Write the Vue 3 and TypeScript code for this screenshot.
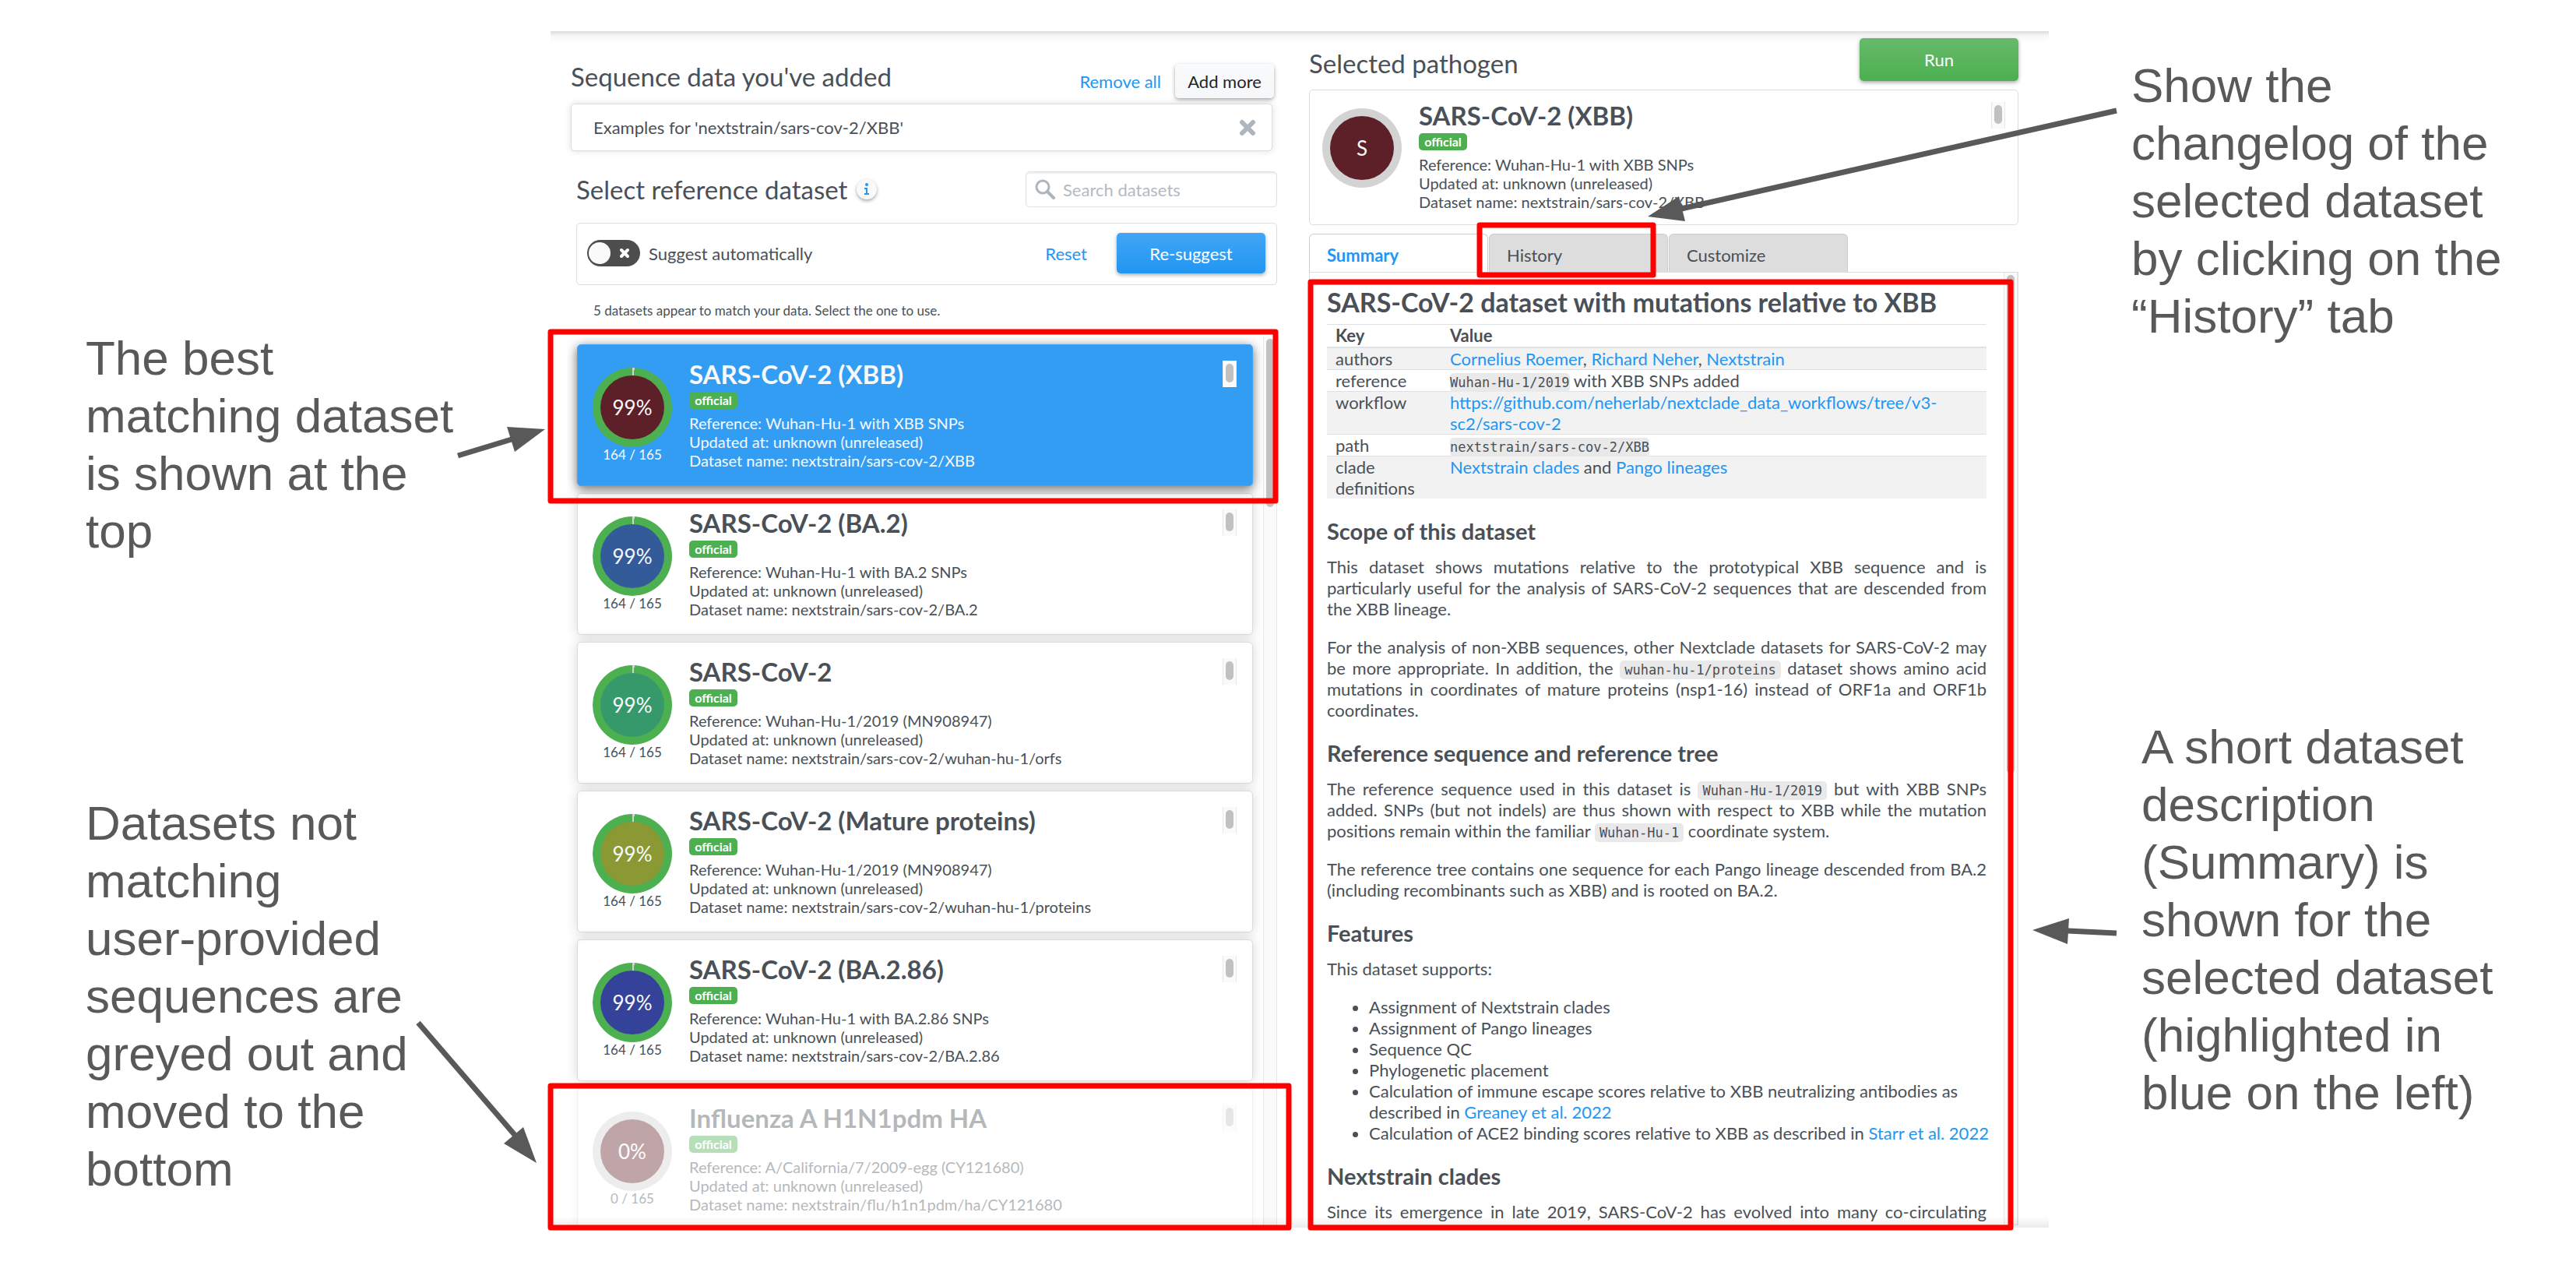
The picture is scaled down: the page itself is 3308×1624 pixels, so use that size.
<script setup lang="ts">
import { ref } from 'vue'

interface Dataset {
  name: string
  reference: string
  path: string
  color: string
  percent: string
  count: string
  matched: boolean
}

const datasets: Dataset[] = [
  { name: 'SARS-CoV-2 (XBB)', reference: 'Wuhan-Hu-1 with XBB SNPs', path: 'nextstrain/sars-cov-2/XBB', color: '#5e2028', percent: '99%', count: '164 / 165', matched: true },
  { name: 'SARS-CoV-2 (BA.2)', reference: 'Wuhan-Hu-1 with BA.2 SNPs', path: 'nextstrain/sars-cov-2/BA.2', color: '#345b99', percent: '99%', count: '164 / 165', matched: true },
  { name: 'SARS-CoV-2', reference: 'Wuhan-Hu-1/2019 (MN908947)', path: 'nextstrain/sars-cov-2/wuhan-hu-1/orfs', color: '#36996b', percent: '99%', count: '164 / 165', matched: true },
  { name: 'SARS-CoV-2 (Mature proteins)', reference: 'Wuhan-Hu-1/2019 (MN908947)', path: 'nextstrain/sars-cov-2/wuhan-hu-1/proteins', color: '#8a9934', percent: '99%', count: '164 / 165', matched: true },
  { name: 'SARS-CoV-2 (BA.2.86)', reference: 'Wuhan-Hu-1 with BA.2.86 SNPs', path: 'nextstrain/sars-cov-2/BA.2.86', color: '#344299', percent: '99%', count: '164 / 165', matched: true },
  { name: 'Influenza A H1N1pdm HA', reference: 'A/California/7/2009-egg (CY121680)', path: 'nextstrain/flu/h1n1pdm/ha/CY121680', color: '#642127', percent: '0%', count: '0 / 165', matched: false },
]

const selected = ref(0)
const autoSuggest = ref(false)
const search = ref('')
const tabs = ['Summary', 'History', 'Customize']
const activeTab = ref('Summary')

const leftNotes = [
  'The best\nmatching dataset\nis shown at the\ntop',
  'Datasets not\nmatching\nuser-provided\nsequences are\ngreyed out and\nmoved to the\nbottom',
]
const rightNotes = [
  'Show the\nchangelog of the\nselected dataset\nby clicking on the\n“History” tab',
  'A short dataset\ndescription\n(Summary) is\nshown for the\nselected dataset\n(highlighted in\nblue on the left)',
]
</script>

<template>
  <div class="stage">
    <aside class="notes notes-left">
      <p v-for="n in leftNotes" :key="n">{{ n }}</p>
    </aside>

    <main class="app">
      <section class="col">
        <header class="files-head">
          <h2>Sequence data you've added</h2>
          <a href="#">Remove all</a>
          <button type="button" class="btn btn-light">Add more</button>
        </header>
        <div class="file">
          <span>Examples for 'nextstrain/sars-cov-2/XBB'</span>
          <button type="button" class="icon-btn" aria-label="Remove file">
            <svg width="22" height="22" viewBox="0 0 22 22"><path d="M4 4L18 18M18 4L4 18" stroke="#adb5bd" stroke-width="6" stroke-linecap="round" /></svg>
          </button>
        </div>

        <div class="picker">
          <div class="picker-head">
            <h2>Select reference dataset</h2>
            <button type="button" class="info" aria-label="Info">
              <svg width="26" height="26" viewBox="0 0 26 26"><circle cx="13" cy="7" r="2" fill="#2196f3" /><path d="M10 11h4v7h2v2h-6v-2h2v-5h-2z" fill="#2196f3" /></svg>
            </button>
            <label class="search">
              <svg width="28" height="28" viewBox="0 0 28 28"><circle cx="11" cy="11" r="8" fill="none" stroke="#adb5bd" stroke-width="3" /><path d="M17 17L25 25" stroke="#adb5bd" stroke-width="4" stroke-linecap="round" /></svg>
              <input v-model="search" type="text" placeholder="Search datasets" aria-label="Search datasets" />
            </label>
          </div>

          <div class="suggest">
            <label class="switch">
              <input v-model="autoSuggest" type="checkbox" />
              <span class="track">
                <i class="knob"></i>
                <svg width="14" height="14" viewBox="0 0 14 14"><path d="M3 3L11 11M11 3L3 11" stroke="#fff" stroke-width="4" stroke-linecap="round" /></svg>
              </span>
              <span>Suggest automatically</span>
            </label>
            <a href="#">Reset</a>
            <button type="button" class="btn btn-blue">Re-suggest</button>
          </div>
          <p class="hint">5 datasets appear to match your data. Select the one to use.</p>
        </div>

        <div class="list">
          <div class="cards">
            <article
              v-for="(d, i) in datasets"
              :key="d.path"
              class="card"
              :class="{ active: i === selected, dim: !d.matched }"
              @click="selected = i"
            >
              <div class="score">
                <div class="ring" :class="{ full: d.matched }">
                  <span class="disc" :style="{ background: d.color }">{{ d.percent }}</span>
                </div>
                <small>{{ d.count }}</small>
              </div>
              <div class="info-text">
                <h3>{{ d.name }}</h3>
                <span class="badge">official</span>
                <p>Reference: {{ d.reference }}</p>
                <p>Updated at: unknown (unreleased)</p>
                <p>Dataset name: {{ d.path }}</p>
              </div>
              <div class="mini-scroll"><i></i></div>
            </article>
          </div>
          <div class="scrollbar list-bar"><i></i></div>
        </div>
      </section>

      <section class="col">
        <header class="run-head">
          <h2>Selected pathogen</h2>
          <button type="button" class="btn btn-green">Run</button>
        </header>
        <div class="chosen">
          <div class="ring">
            <span class="disc" :style="{ background: datasets[selected].color }">S</span>
          </div>
          <div class="info-text">
            <h3>{{ datasets[selected].name }}</h3>
            <span class="badge">official</span>
            <p>Reference: {{ datasets[selected].reference }}</p>
            <p>Updated at: unknown (unreleased)</p>
            <p>Dataset name: {{ datasets[selected].path }}</p>
          </div>
          <div class="mini-scroll"><i></i></div>
        </div>
        <nav class="tabs">
          <button v-for="t in tabs" :key="t" type="button" :class="{ on: t === activeTab }" @click="activeTab = t">{{ t }}</button>
        </nav>
        <div class="readme">
          <div class="doc">
            <h1>SARS-CoV-2 dataset with mutations relative to XBB</h1>
            <table>
              <thead>
                <tr><th class="key">Key</th><th>Value</th></tr>
              </thead>
              <tbody>
                <tr><td>authors</td><td><a href="#">Cornelius Roemer</a>, <a href="#">Richard Neher</a>, <a href="#">Nextstrain</a></td></tr>
                <tr><td>reference</td><td><code>Wuhan-Hu-1/2019</code> with XBB SNPs added</td></tr>
                <tr><td>workflow</td><td><a href="#">https://github.com/neherlab/nextclade_data_workflows/tree/v3-sc2/sars-cov-2</a></td></tr>
                <tr><td>path</td><td><code>nextstrain/sars-cov-2/XBB</code></td></tr>
                <tr><td>clade definitions</td><td><a href="#">Nextstrain clades</a> and <a href="#">Pango lineages</a></td></tr>
              </tbody>
            </table>
            <h2>Scope of this dataset</h2>
            <p>This dataset shows mutations relative to the prototypical XBB sequence and is particularly useful for the analysis of SARS-CoV-2 sequences that are descended from the XBB lineage.</p>
            <p>For the analysis of non-XBB sequences, other Nextclade datasets for SARS-CoV-2 may be more appropriate. In addition, the <code>wuhan-hu-1/proteins</code> dataset shows amino acid mutations in coordinates of mature proteins (nsp1-16) instead of ORF1a and ORF1b coordinates.</p>
            <h2>Reference sequence and reference tree</h2>
            <p>The reference sequence used in this dataset is <code>Wuhan-Hu-1/2019</code> but with XBB SNPs added. SNPs (but not indels) are thus shown with respect to XBB while the mutation positions remain within the familiar <code>Wuhan-Hu-1</code> coordinate system.</p>
            <p>The reference tree contains one sequence for each Pango lineage descended from BA.2 (including recombinants such as XBB) and is rooted on BA.2.</p>
            <h2>Features</h2>
            <p>This dataset supports:</p>
            <ul>
              <li>Assignment of Nextstrain clades</li>
              <li>Assignment of Pango lineages</li>
              <li>Sequence QC</li>
              <li>Phylogenetic placement</li>
              <li>Calculation of immune escape scores relative to XBB neutralizing antibodies as described in <a href="#">Greaney et al. 2022</a></li>
              <li>Calculation of ACE2 binding scores relative to XBB as described in <a href="#">Starr et al. 2022</a></li>
            </ul>
            <h2>Nextstrain clades</h2>
            <p class="cut">Since its emergence in late 2019, SARS-CoV-2 has evolved into many co-circulating</p>
          </div>
          <div class="scrollbar doc-bar"><i></i></div>
        </div>
      </section>
    </main>

    <aside class="notes notes-right">
      <p v-for="n in rightNotes" :key="n">{{ n }}</p>
    </aside>

    <!-- Callout frames and arrows drawn over the app -->
    <svg class="callouts" viewBox="0 0 3308 1624" preserveAspectRatio="none">
      <g fill="none" stroke="#ff0000" stroke-width="7" stroke-linejoin="round">
        <rect x="707" y="426" width="931" height="217" />
        <rect x="707" y="1394" width="948" height="182" />
        <rect x="1683" y="362" width="899" height="1214" />
        <rect x="1900" y="289" width="223" height="64" />
      </g>
      <g stroke="#595959" stroke-width="7">
        <path d="M588 585L657 564" />
        <path d="M537 1313L661 1457" />
        <path d="M2718 142L2159 268" />
        <path d="M2718 1198L2655 1195" />
      </g>
      <g fill="#595959">
        <path d="M700 551L651 548L661 580Z" />
        <path d="M689 1493L672 1447L647 1468Z" />
        <path d="M2116 278L2156 252L2164 284Z" />
        <path d="M2610 1194L2657 1179L2655 1212Z" />
      </g>
    </svg>
  </div>
</template>

<style>
body {
  margin: 0;
  background: #fff;
}
</style>

<style scoped>
* {
  box-sizing: border-box;
}
.stage {
  position: relative;
  display: grid;
  grid-template-columns: 707fr 1924fr 677fr;
  height: 100vh;
  overflow: hidden;
  font-family: Lato, 'Liberation Sans', sans-serif;
  font-size: 22px;
  line-height: 27px;
  color: #495057;
}
h1, h2, h3, p, ul {
  margin: 0;
}
a {
  color: #2196f3;
  text-decoration: none;
}
button, input {
  font: inherit;
  color: inherit;
}
.callouts {
  position: absolute;
  inset: 0;
  width: 100%;
  height: 100%;
  pointer-events: none;
}

/* Side notes */
.notes {
  display: flex;
  flex-direction: column;
  font-family: 'Liberation Sans', Arial, sans-serif;
  font-size: 62px;
  line-height: 74px;
  color: #595959;
  white-space: pre;
}
.notes-left {
  padding: 423px 0 0 110px;
  gap: 301px;
}
.notes-right {
  padding: 73px 0 0 106px;
  gap: 479px;
}
.notes-right p:last-child {
  padding-left: 13px;
}

/* App frame */
.app {
  position: relative;
  display: grid;
  grid-template-columns: 907fr 911fr;
  gap: 41px;
  min-height: 0;
  margin: 40px 0 48px;
  padding: 0 39px 0 26px;
  background: linear-gradient(#dcdcdc, #f6f6f6 6px, #fff 14px);
}
.app::after {
  content: '';
  position: absolute;
  left: 0;
  right: 0;
  bottom: 0;
  height: 14px;
  background: linear-gradient(rgba(0, 0, 0, 0), rgba(0, 0, 0, 0.08));
}
.col {
  display: flex;
  flex-direction: column;
  min-width: 0;
  min-height: 0;
}
.col h2 {
  font-size: 33px;
  font-weight: 400;
}
.btn {
  border: 0;
  border-radius: 5px;
  color: #fff;
  box-shadow: 0 2px 5px rgba(0, 0, 0, 0.35);
}
.btn-light {
  width: 127px;
  height: 44px;
  padding: 0;
  background: linear-gradient(#f9fafb, #f5f7f9);
  color: #212529;
}
.btn-blue {
  width: 191px;
  height: 52px;
  background: linear-gradient(#42a5f5, #2196f3);
}
.btn-green {
  width: 204px;
  height: 55px;
  background: linear-gradient(#66bb6a, #4caf50);
}

/* Input files */
.files-head {
  display: flex;
  align-items: center;
  gap: 18px;
  height: 44px;
  margin: 42px 4px 0 0;
}
.files-head h2 {
  flex: 1;
  align-self: flex-start;
  line-height: 32px;
}
.file {
  display: flex;
  align-items: center;
  justify-content: space-between;
  height: 61px;
  margin: 7px 6px 0 0;
  padding: 0 20px 0 28px;
  background: #fff;
  border: 1px solid #ddd;
  border-radius: 5px;
  box-shadow: 0 0 10px rgba(0, 0, 0, 0.13);
}
.icon-btn {
  display: flex;
  padding: 0;
  border: 0;
  background: none;
}

/* Dataset picker */
.picker {
  margin: 26px 0 0 7px;
}
.picker-head {
  display: flex;
  align-items: center;
  height: 46px;
}
.picker-head h2 {
  line-height: 46px;
}
.info {
  display: flex;
  width: 26px;
  height: 26px;
  margin-left: 12px;
  padding: 0;
  border: 0;
  border-radius: 50%;
  background: #f8f9fa;
  box-shadow: 0 2px 4px rgba(0, 0, 0, 0.35);
}
.search {
  display: flex;
  align-items: center;
  gap: 9px;
  width: 323px;
  height: 46px;
  margin-left: auto;
  padding: 0 10px;
  border: 1px solid #dee2e6;
  border-radius: 5px;
  box-shadow: inset 0 2px 2px rgba(0, 0, 0, 0.07);
}
.search svg {
  flex: none;
}
.search input {
  min-width: 0;
  flex: 1;
  padding: 0;
  border: 0;
  outline: 0;
  background: none;
}
.search input::placeholder {
  color: #b4bac0;
}
.suggest {
  display: flex;
  align-items: center;
  height: 80px;
  margin-top: 20px;
  padding: 0 14px 2px 13px;
  border: 1px solid #ddd;
  border-radius: 5px;
}
.switch {
  position: relative;
  display: flex;
  align-items: center;
  gap: 11px;
  margin-right: auto;
}
.switch input {
  position: absolute;
  width: 68px;
  height: 34px;
  margin: 0;
  opacity: 0;
}
.track {
  display: flex;
  align-items: center;
  justify-content: space-between;
  width: 68px;
  height: 34px;
  padding: 0 13px 0 2px;
  border-radius: 17px;
  background: #4d4d4d;
}
.knob {
  width: 28px;
  height: 28px;
  border-radius: 50%;
  background: #fafafa;
}
.suggest .btn {
  margin-left: 38px;
}
.hint {
  margin: 21px 0 0 22px;
  font-size: 17px;
  line-height: 24px;
}
.list {
  display: flex;
  flex: 1;
  min-height: 0;
  margin: 21px 0 0 -5px;
  overflow: hidden;
}
.cards {
  display: flex;
  flex: 1;
  flex-direction: column;
  gap: 9px;
  padding: 10px 13px 0;
}
.card {
  display: flex;
  flex: none;
  height: 182px;
  padding: 17px 20px 0 19px;
  border: 1px solid #dcdcdc;
  border-radius: 5px;
  background: #fff;
  box-shadow: 0 0 16px rgba(0, 0, 0, 0.16), inset 0 0 10px rgba(0, 0, 0, 0.02);
}
.card.active {
  position: relative;
  border-color: #42a5f5;
  background: #339df4;
  color: #f8f9fa;
  box-shadow: 0 3px 14px rgba(0, 0, 0, 0.6);
}
.card.dim {
  opacity: 0.4;
  box-shadow: 0 0 10px rgba(0, 0, 0, 0.1);
}
.score {
  display: flex;
  flex-direction: column;
  align-items: center;
  padding-top: 12px;
}
.score small {
  font-size: 17px;
  line-height: 20px;
}
.ring {
  display: flex;
  flex: none;
  width: 102px;
  height: 102px;
  padding: 10px;
  border-radius: 50%;
  background: #d3d3d3;
}
.ring.full {
  background: conic-gradient(#d3d3d3 3deg, #4caf50 3deg);
}
.disc {
  display: flex;
  flex: 1;
  align-items: center;
  justify-content: center;
  border-radius: 50%;
  color: #f8f9fa;
  font-size: 26px;
}
.info-text {
  flex: 1;
  min-width: 0;
  padding-left: 22px;
}
.info-text h3 {
  font-size: 33px;
  font-weight: 700;
  line-height: 40px;
}
.info-text p {
  font-size: 20px;
  line-height: 24px;
}
.badge {
  display: block;
  width: 62px;
  height: 22px;
  margin: 3px 0 6px;
  border-radius: 5px;
  background: #4caf50;
  color: #fff;
  font-size: 16px;
  font-weight: 700;
  line-height: 22px;
  text-align: center;
}
.mini-scroll {
  display: flex;
  justify-content: center;
  width: 18px;
  height: 34px;
  margin-top: 3px;
  padding-top: 4px;
  border: solid #e8e8e8;
  border-width: 0 1px;
  background: #fafafa;
}
.mini-scroll i {
  width: 10px;
  height: 24px;
  border-radius: 5px;
  background: #c1c1c1;
}
.scrollbar {
  display: flex;
  justify-content: center;
  flex: none;
  width: 18px;
  padding-top: 3px;
  border: solid #e8e8e8;
  border-width: 0 1px;
  background: #fafafa;
}
.scrollbar i {
  width: 10px;
  border-radius: 5px;
  background: #c1c1c1;
}
.list-bar i {
  height: 216px;
}
.doc-bar i {
  height: 640px;
}

/* Selected dataset */
.run-head {
  display: flex;
  align-items: flex-end;
  justify-content: space-between;
  height: 55px;
  margin-top: 9px;
}
.run-head h2 {
  line-height: 46px;
}
.chosen {
  display: flex;
  height: 174px;
  margin-top: 11px;
  padding: 12px 16px 0;
  border: 1px solid #ddd;
  border-radius: 5px;
}
.chosen .ring {
  margin-top: 11px;
}
.tabs {
  display: flex;
  gap: 1px;
  height: 49px;
  margin-top: 11px;
}
.tabs button {
  width: 230px;
  padding: 4px 0 0 22px;
  border: 1px solid #ccc;
  border-bottom: 0;
  border-radius: 6px 6px 0 0;
  background: #ddd;
  text-align: left;
}
.tabs .on {
  background: #fff;
  color: #2196f3;
  font-weight: 700;
}
.readme {
  display: flex;
  flex: 1;
  min-height: 0;
  margin-bottom: 3px;
  border: 1px solid #ddd;
  overflow: hidden;
}
.doc {
  flex: 1;
  min-width: 0;
  padding: 18px 22px 0;
}
.doc h1 {
  margin-bottom: 8px;
  font-size: 34px;
  font-weight: 700;
  line-height: 40px;
}
.doc h2 {
  margin: 25px 0 15px;
  font-size: 29px;
  font-weight: 700;
  line-height: 34px;
}
.doc p {
  margin-bottom: 22px;
  text-align: justify;
}
.doc .cut {
  text-align-last: justify;
}
table {
  width: 100%;
  border-collapse: collapse;
}
th, td {
  padding: 0 11px;
  border-top: 1px solid #dee2e6;
  text-align: left;
  vertical-align: top;
}
th {
  padding-bottom: 1px;
  border-bottom: 2px solid #dee2e6;
}
.key {
  width: 147px;
}
tbody tr:nth-child(odd) {
  background: #f2f2f2;
}
code {
  padding: 2px 6px;
  border-radius: 5px;
  background: #e9e9e9;
  font-family: 'DejaVu Sans Mono', monospace;
  font-size: 17px;
  line-height: 18px;
}
td code {
  padding: 2px 0;
}
ul {
  margin-right: -12px;
  padding-left: 54px;
}
</style>
